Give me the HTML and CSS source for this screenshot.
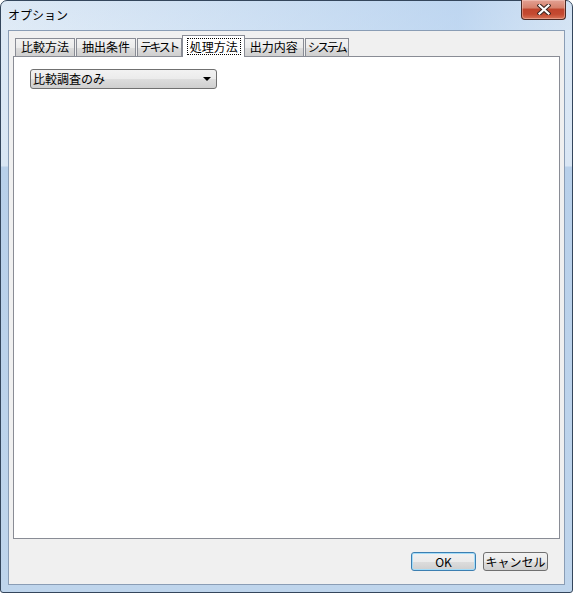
FILE: index.html
```html
<!DOCTYPE html>
<html lang="ja">
<head>
    <meta charset="UTF-8">
    <title>オプション</title>
    <link rel="stylesheet" href="styles.css">
</head>
<body>
    <div class="window">
        <div class="titlebar">
            <span class="title">オプション</span>
            <button class="close-btn">
                <svg width="14" height="11" viewBox="0 0 14 11">
                    <path d="M2.5 1.5 L11.5 9.5 M11.5 1.5 L2.5 9.5" stroke="#3b2520" stroke-width="4.2" stroke-linecap="square"/>
                    <path d="M2.5 1.5 L11.5 9.5 M11.5 1.5 L2.5 9.5" stroke="#ffffff" stroke-width="2.2" stroke-linecap="square"/>
                </svg>
            </button>
        </div>
        <div class="client">
            <div class="tabs">
                <div class="tab">比較方法</div>
                <div class="tab">抽出条件</div>
                <div class="tab kana">テキスト</div>
                <div class="tab active"><span class="focus">処理方法</span></div>
                <div class="tab">出力内容</div>
                <div class="tab kana">システム</div>
            </div>
            <div class="panel">
                <div class="combo">
                    <span class="combo-text">比較調査のみ</span>
                    <span class="combo-arrow"></span>
                </div>
            </div>
            <div class="footer">
                <button class="btn default">OK</button>
                <button class="btn">キャンセル</button>
            </div>
        </div>
    </div>
</body>
</html>
```

FILE: styles.css
```css
body {
    margin: 0;
    width: 573px;
    height: 593px;
    overflow: hidden;
    font-family: "Noto Sans CJK JP", "Noto Sans", sans-serif;
    font-size: 12px;
    color: #000;
}

.window {
    box-sizing: border-box;
    width: 573px;
    height: 593px;
    border: 1px solid #34465c;
    border-radius: 7px 7px 3px 3px;
    display: flex;
    flex-direction: column;
    background: linear-gradient(180deg, #d6e4f3 0, #dbe8f5 30px, #d9e6f4 165px, #b8d0ea 166px, #bfd5ec 100%);
}

.titlebar {
    height: 29px;
    display: flex;
    align-items: flex-start;
    padding-left: 7px;
    padding-right: 6px;
    background: linear-gradient(90deg, rgba(255, 255, 255, 0.15), rgba(170, 202, 238, 0.55) 80%, rgba(200, 220, 242, 0.3));
    border-radius: 6px 6px 0 0;
}

.title {
    line-height: 14px;
    margin-top: 7px;
}

.close-btn {
    margin-left: auto;
    margin-top: -1px;
    width: 45px;
    height: 20px;
    padding: 0;
    border: 1px solid #4b2a24;
    border-top: none;
    border-radius: 0 0 4px 4px;
    background: linear-gradient(180deg, #e3a193 0, #d6826d 40%, #c0452d 50%, #c44a31 75%, #d87458 100%);
    box-shadow: inset 0 0 0 1px rgba(255, 220, 210, 0.4);
    display: flex;
    align-items: center;
    justify-content: center;
}

.client {
    flex: 1;
    margin: 0 7px 7px;
    border: 1px solid #8a9db5;
    background: #f0f0f0;
    display: flex;
    flex-direction: column;
    padding: 4px 4px 0 4px;
}

.tabs {
    display: flex;
    align-items: flex-end;
    height: 21px;
    padding-left: 2px;
    position: relative;
    z-index: 1;
}

.tab {
    box-sizing: border-box;
    height: 18px;
    padding: 0 5px;
    margin-right: 1px;
    border: 1px solid #898c95;
    border-bottom: none;
    background: linear-gradient(180deg, #f3f3f3 0, #ebebeb 50%, #dddddd 51%, #cfcfcf 100%);
    line-height: 16px;
}

/* katakana labels sit tighter than the kanji ones */
.tab.kana {
    letter-spacing: -2.5px;
    padding: 0 3px 0 2px;
}

.tab.active {
    height: 22px;
    margin: 0 -1px -1px -1px;
    padding: 2px 3px 0 4px;
    background: #fff;
    position: relative;
    z-index: 1;
}

.focus {
    display: block;
    padding: 0 2px;
    border: 1px dotted #000;
    line-height: 15px;
}

.panel {
    flex: 1;
    border: 1px solid #898c95;
    background: #fff;
    padding: 12px 16px 0;
}

.combo {
    box-sizing: border-box;
    width: 187px;
    height: 20px;
    border: 1px solid #707070;
    border-radius: 3px;
    background: linear-gradient(180deg, #f2f2f2 0, #ebebeb 50%, #dddddd 51%, #cfcfcf 100%);
    display: flex;
    align-items: center;
    padding: 0 5px 0 2px;
}

.combo-text {
    flex: 1;
    line-height: 16px;
}

.combo-arrow {
    width: 0;
    height: 0;
    border-left: 4px solid transparent;
    border-right: 4px solid transparent;
    border-top: 4px solid #000;
}

.footer {
    height: 45px;
    display: flex;
    justify-content: flex-end;
    align-items: flex-start;
    gap: 7px;
    padding: 13px 12px 0 0;
    box-sizing: border-box;
}

.btn {
    box-sizing: border-box;
    width: 65px;
    height: 19px;
    padding: 0;
    border: 1px solid #707070;
    border-radius: 3px;
    background: linear-gradient(180deg, #f2f2f2 0, #ebebeb 50%, #dddddd 51%, #cfcfcf 100%);
    font-family: inherit;
    font-size: 12px;
    line-height: 16px;
    color: #000;
}

.btn.default {
    border-color: #3c7fb1;
    box-shadow: inset 0 0 0 1px #a4dcf8;
}
```
